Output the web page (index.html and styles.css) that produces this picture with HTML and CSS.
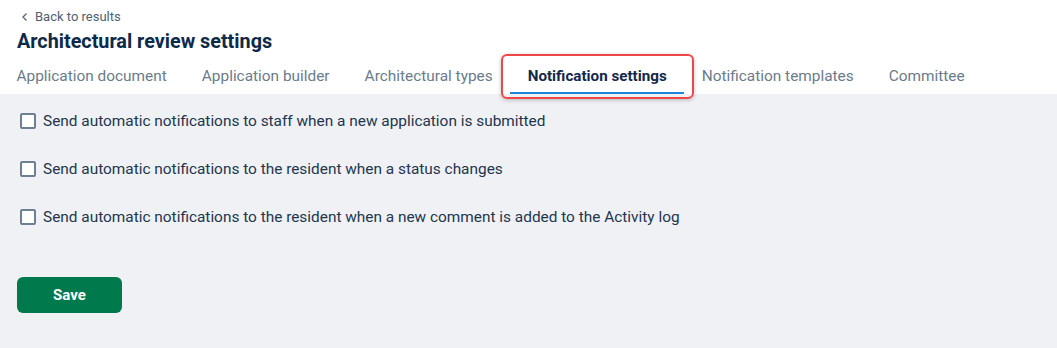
FILE: index.html
```html
<!DOCTYPE html>
<html>

<head>
    <meta charset="utf-8" />
    <title>Architectural review settings</title>
    <meta name="viewport" content="width=device-width, initial-scale=1">
    <link rel="stylesheet" href="styles.css">
</head>

<body>
    <div class="header">
        <a class="back-link" href="#">
            <svg class="back-icon" width="8" height="10" viewBox="0 0 8 10">
                <path d="M5.5 1.5 L2 5 L5.5 8.5" fill="none" stroke="#5b6b7c" stroke-width="1.4" />
            </svg>
            Back to results
        </a>
        <h1 class="page-title">Architectural review settings</h1>
        <div class="tabs">
            <div class="tab">Application document</div>
            <div class="tab">Application builder</div>
            <div class="tab">Architectural types</div>
            <div class="tab active">Notification settings</div>
            <div class="tab">Notification templates</div>
            <div class="tab">Committee</div>
        </div>
    </div>

    <div class="content">
        <label class="option">
            <span class="check"></span>
            Send automatic notifications to staff when a new application is submitted
        </label>
        <label class="option">
            <span class="check"></span>
            Send automatic notifications to the resident when a status changes
        </label>
        <label class="option">
            <span class="check"></span>
            Send automatic notifications to the resident when a new comment is added to the Activity log
        </label>

        <button class="save-button">Save</button>
    </div>
</body>

</html>
```

FILE: styles.css
```css
body {
    margin: 0;
    font-family: Roboto, "Liberation Sans", sans-serif;
    background: #f0f1f5;
    height: 348px;
}

.header {
    background: #fff;
    padding: 8px 0 0 17px;
}

.back-link {
    display: flex;
    align-items: center;
    gap: 6px;
    margin-left: 4px;
    font-size: 13px;
    color: #4e5f72;
    text-decoration: none;
    line-height: 17px;
}

.page-title {
    margin: 4px 0 0 0;
    font-size: 19.8px;
    font-weight: 700;
    color: #0e2a4a;
    line-height: 26px;
}

.tabs {
    display: flex;
    margin-top: 8px;
    margin-left: -18px;
}

.tab {
    position: relative;
    padding: 3px 17.5px 0 17.5px;
    font-size: 15.4px;
    line-height: 20px;
    height: 31px;
    color: #6c7b8a;
    box-sizing: border-box;
}

.tab.active {
    font-size: 15.2px;
    font-weight: 700;
    color: #13294a;
    border-bottom: 2px solid #1a86d8;
}

/* highlight around the active tab */
.tab.active::after {
    content: "";
    position: absolute;
    left: -9px;
    right: -10px;
    top: -9px;
    bottom: -7px;
    border: 2px solid #ef4747;
    border-radius: 6px;
    box-shadow: 0 1px 4px rgba(0, 0, 0, 0.25);
}

.content {
    padding: 15px 17px;
}

.option {
    display: flex;
    align-items: center;
    gap: 7px;
    margin-left: 3px;
    height: 24px;
    margin-bottom: 24px;
    font-size: 15.4px;
    color: #23364d;
}

.check {
    width: 12px;
    height: 12px;
    border: 2px solid #6d7f93;
    border-radius: 2px;
    background: #fff;
}

.save-button {
    margin-top: 24px;
    width: 105px;
    height: 36px;
    border: none;
    border-radius: 6px;
    background: #007a4d;
    color: #fff;
    font-family: Roboto, "Liberation Sans", sans-serif;
    font-size: 15px;
    font-weight: 700;
    cursor: pointer;
}
```
